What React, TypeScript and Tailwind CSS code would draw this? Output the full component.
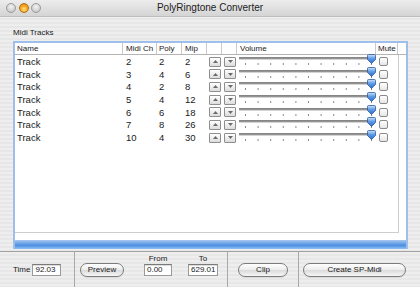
import React from "react";

const rows: [number, number, number][] = [
  [2, 2, 2],
  [3, 4, 6],
  [4, 2, 8],
  [5, 4, 12],
  [6, 6, 18],
  [7, 8, 26],
  [10, 4, 30],
];

const gridCols = "grid grid-cols-[108px_34px_25px_25px_15px_15px_139px_22px_8px]";

function Slider({ id }: { id: string }) {
  const ticks = Array.from({ length: 11 }, (_, k) => 8 + 12.6 * k);
  return (
    <svg width="139" height="13" viewBox="0 0 139 13" className="overflow-visible block">
      <defs>
        <linearGradient id={id} x1="0" y1="0" x2="0" y2="1">
          <stop offset="0" stopColor="#cfe4fb" />
          <stop offset="0.45" stopColor="#5d9ae6" />
          <stop offset="1" stopColor="#2f6cc9" />
        </linearGradient>
      </defs>
      <line x1="2" y1="3" x2="134" y2="3" stroke="#5e5e5e" strokeWidth="1.5" />
      <line x1="2" y1="4.3" x2="134" y2="4.3" stroke="#c9c9c9" strokeWidth="1" />
      {ticks.map((x, k) => (
        <rect key={k} x={x} y="8" width="1" height="2" fill="#8c8c8c" />
      ))}
      <path
        d="M131.5,-0.5 h6 a1,1 0 0 1 1,1 v4 l-4,4 l-4,-4 v-4 a1,1 0 0 1 1,-1 z"
        fill={`url(#${id})`}
        stroke="#2c5a9e"
        strokeWidth="0.8"
      />
    </svg>
  );
}

function ArrowBtn({ up }: { up: boolean }) {
  return (
    <div className="ml-[2px] w-[12px] h-[10px] rounded-[1px] border border-[#8e8e8e] bg-[linear-gradient(#ffffff,#dcdcdc)] flex items-center justify-center">
      <svg width="5" height="3" viewBox="0 0 5 3" className="block">
        {up ? <path d="M0,3 L2.5,0 L5,3 z" fill="#6a6a6a" /> : <path d="M0,0 L2.5,3 L5,0 z" fill="#6a6a6a" />}
      </svg>
    </div>
  );
}

function Pill({ label, w }: { label: string; w: string }) {
  return (
    <div
      className={`${w} h-[14px] rounded-full border border-[#7c7c7c] bg-[linear-gradient(#ffffff,#ececec_50%,#dadada_51%,#f6f6f6)] flex items-center justify-center text-[8px] text-[#1a1a1a] shadow-[0_1px_0_rgba(0,0,0,0.08)]`}
    >
      {label}
    </div>
  );
}

function Field({ value, w }: { value: string; w: string }) {
  return (
    <div
      className={`${w} h-[12px] overflow-hidden whitespace-nowrap bg-white border border-[#9a9a9a] border-t-[#7a7a7a] shadow-[inset_0_1px_1px_rgba(0,0,0,0.15)] pl-[2px] text-[8px] leading-[10px] text-[#1a1a1a]`}
    >
      {value}
    </div>
  );
}

export default function App() {
  const stripes =
    "bg-[repeating-linear-gradient(180deg,#eeeeee_0px,#eeeeee_2px,#e7e7e7_2px,#e7e7e7_4px)]";
  return (
    <div
      className={`w-[420px] h-[287px] overflow-hidden flex flex-col ${stripes} text-[#1a1a1a]`}
      style={{ fontFamily: '"Liberation Sans", Arial, sans-serif' }}
    >
      {/* Title bar */}
      <div className="h-[17px] shrink-0 grid grid-cols-[1fr_auto_1fr] items-center bg-[linear-gradient(#ececec,#d4d4d4)] border-b border-[#bdbdbd]">
        <div className="flex items-center pl-[6px] gap-[2.5px]">
          <div className="w-[10px] h-[10px] rounded-full border border-[#9a9a9a] bg-[radial-gradient(circle_at_50%_35%,#f4f4f4,#cdcdcd_70%,#b8b8b8)]" />
          <div className="w-[10px] h-[10px] rounded-full border border-[#b0701a] bg-[radial-gradient(circle_at_50%_65%,#ffe27a,#f6a21e_55%,#d97c0c)]" />
          <div className="w-[10px] h-[10px] rounded-full border border-[#9a9a9a] bg-[radial-gradient(circle_at_50%_35%,#f4f4f4,#cdcdcd_70%,#b8b8b8)]" />
        </div>
        <div className="text-[10px] leading-[12px] text-[#222]">PolyRingtone Converter</div>
        <div />
      </div>

      {/* Main area */}
      <div className="flex-1 flex flex-col">
        <div className="pl-[13px] pt-[11px] h-[21px] text-[8px] leading-[10px]">Midi Tracks</div>
        <div className="mt-[3px] ml-[13px] w-[395px] h-[208px] flex flex-col border-x-2 border-t-2 border-[#9dbfe9]">
          <div className="h-[197px] bg-white flex flex-col">
            {/* header */}
            <div className={`${gridCols} h-[12px] border-b border-[#b4b4b4] text-[8px] leading-[11px]`}>
              <div className="border-r border-[#cacaca] pl-[2px]">Name</div>
              <div className="border-r border-[#cacaca] pl-[3px]">Midi Ch</div>
              <div className="border-r border-[#cacaca] pl-[2px]">Poly</div>
              <div className="border-r border-[#cacaca] pl-[3px]">Mip</div>
              <div className="border-r border-[#cacaca]" />
              <div className="border-r border-[#cacaca]" />
              <div className="border-r border-[#cacaca] pl-[3px]">Volume</div>
              <div className="border-r border-[#cacaca] pl-[2px]">Mute</div>
              <div />
            </div>
            {/* body */}
            <div className="w-[384px] h-[178px] border-r border-b border-[#cdcdcd] flex flex-col">
              {rows.map(([ch, poly, mip], i) => (
                <div key={i} className={`${gridCols} h-[12.7px] items-center text-[9.5px] leading-[11px]`}>
                  <div className="pl-[2px]">Track</div>
                  <div className="pl-[3px]">{ch}</div>
                  <div className="pl-[2px]">{poly}</div>
                  <div className="pl-[3px]">{mip}</div>
                  <ArrowBtn up />
                  <ArrowBtn up={false} />
                  <div className="self-start">
                    <Slider id={`thumb${i}`} />
                  </div>
                  <div className="pl-[3px]">
                    <div className="w-[9px] h-[9px] rounded-[2px] border border-[#8a8a8a] bg-[linear-gradient(#ffffff,#e6e6e6)]" />
                  </div>
                  <div />
                </div>
              ))}
            </div>
          </div>
          <div className="h-[9px] bg-[linear-gradient(#a9c9ef,#7aacea_30%,#4e8fe2_60%,#8fc2f6)]" />
        </div>
      </div>

      {/* Bottom panel */}
      <div className="h-[36px] shrink-0 flex border-t border-[#a2a2a2] text-[8px]">
        <div className="w-[75px] border-r border-[#a8a8a8] flex items-center pl-[13px] gap-[2px] pt-[1px]">
          <span>Time</span>
          <Field value="92.03" w="w-[29px]" />
        </div>
        <div className="w-[153px] border-r border-[#a8a8a8] flex items-start">
          <div className="ml-[5px] mt-[11px]">
            <Pill label="Preview" w="w-[44px]" />
          </div>
          <div className="ml-[20px] mt-[2px] flex flex-col items-center">
            <div className="h-[9px] leading-[9px] text-[8px]">From</div>
            <div className="mt-[1px]">
              <Field value="0.00" w="w-[28px]" />
            </div>
          </div>
          <div className="ml-[16px] mt-[2px] flex flex-col items-center">
            <div className="h-[9px] leading-[9px] text-[8px]">To</div>
            <div className="mt-[1px]">
              <Field value="629.01" w="w-[30px]" />
            </div>
          </div>
        </div>
        <div className="w-[71px] border-r border-[#a8a8a8] flex items-start">
          <div className="ml-[10px] mt-[11px]">
            <Pill label="Clip" w="w-[50px]" />
          </div>
        </div>
        <div className="flex-1 flex items-start">
          <div className="ml-[4px] mt-[11px]">
            <Pill label="Create SP-Midi" w="w-[103px]" />
          </div>
        </div>
      </div>
    </div>
  );
}
